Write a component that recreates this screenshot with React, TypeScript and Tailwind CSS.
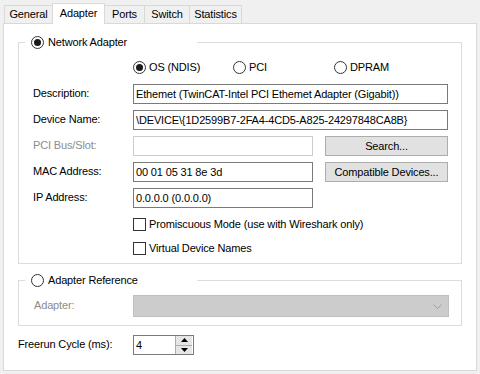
import React from "react";

const Radio = ({ checked }: { checked?: boolean }) => (
  <span className="w-[13px] h-[13px] rounded-full border border-[#333333] bg-white flex items-center justify-center shrink-0">
    {checked && <span className="w-[7px] h-[7px] rounded-full bg-[#1a1a1a]" />}
  </span>
);

const Check = () => (
  <span className="w-[13px] h-[13px] border border-[#333333] bg-white shrink-0" />
);

const Field = ({ text, disabled }: { text?: string; disabled?: boolean }) => (
  <div
    className={
      "h-[20px] border bg-white flex items-center pl-[2px] whitespace-nowrap overflow-hidden " +
      (disabled ? "border-[#cccccc]" : "border-[#7a7a7a]")
    }
  >
    {text}
  </div>
);

const Button = ({ text }: { text: string }) => (
  <div className="h-[20px] border border-[#adadad] bg-[#e1e1e1] flex items-center justify-center">
    {text}
  </div>
);

function Tab({ label, w, selected, first }: { label: string; w: string; selected?: boolean; first?: boolean }) {
  return (
    <div
      className={
        "border border-b-0 border-[#d9d9d9] flex items-center justify-center " +
        w +
        (first ? "" : " -ml-px") +
        (selected ? " h-[21px] -mb-px bg-white relative z-10 pb-[2px]" : " h-[18px] bg-[#f0f0f0] pb-px")
      }
    >
      {label}
    </div>
  );
}

export default function App() {
  return (
    <div className="w-[480px] h-[374px] bg-[#f0f0f0] overflow-hidden text-[11px] leading-none tracking-[-0.15px] text-black font-['Liberation_Sans',Arial,sans-serif]">
      <div className="flex items-end h-[23px] pl-[4px]">
        <Tab label="General" w="w-[49px]" first />
        <Tab label="Adapter" w="w-[53px]" selected />
        <Tab label="Ports" w="w-[41px]" />
        <Tab label="Switch" w="w-[46px]" />
        <Tab label="Statistics" w="w-[53px]" />
      </div>
      <div className="ml-[3px] w-[474px] h-[348px] border border-[#d9d9d9] bg-white pl-[14px] pt-[10px]">
        <fieldset className="w-[444px] border border-[#dcdcdc] pb-[8px]">
          <legend className="ml-[6px] w-[172px] h-[16px] flex items-center gap-[4px] pl-[6px]">
            <Radio checked />
            <span>Network Adapter</span>
          </legend>
          <div className="pl-[14px] pt-[11px]">
            <div className="flex h-[13px] items-center">
              <div className="w-[100px]" />
              <div className="w-[100px] flex items-center gap-[3px]">
                <Radio checked />
                <span>OS (NDIS)</span>
              </div>
              <div className="w-[101px] flex items-center gap-[3px]">
                <Radio />
                <span>PCI</span>
              </div>
              <div className="flex items-center gap-[3px]">
                <Radio />
                <span>DPRAM</span>
              </div>
            </div>
            <div className="mt-[10px] grid grid-cols-[88px_180px_123px] gap-x-[12px] gap-y-[6px] items-center">
              <span className="-mt-[2px]">Description:</span>
              <div className="col-span-2">
                <Field text="Ethemet (TwinCAT-Intel PCI Ethemet Adapter (Gigabit))" />
              </div>
              <span className="-mt-[2px]">Device Name:</span>
              <div className="col-span-2">
                <Field text="\DEVICE\{1D2599B7-2FA4-4CD5-A825-24297848CA8B}" />
              </div>
              <span className="-mt-[2px] text-[#8c8c8c]">PCI Bus/Slot:</span>
              <Field disabled />
              <Button text="Search..." />
              <span className="-mt-[2px]">MAC Address:</span>
              <Field text="00 01 05 31 8e 3d" />
              <Button text="Compatible Devices..." />
              <span className="-mt-[2px]">IP Address:</span>
              <Field text="0.0.0.0 (0.0.0.0)" />
              <div />
            </div>
            <div className="mt-[10px] pl-[100px] flex flex-col gap-[11px]">
              <div className="flex items-center gap-[3px] h-[13px]">
                <Check />
                <span>Promiscuous Mode (use with Wireshark only)</span>
              </div>
              <div className="flex items-center gap-[3px] h-[13px]">
                <Check />
                <span>Virtual Device Names</span>
              </div>
            </div>
          </div>
        </fieldset>
        <fieldset className="mt-[8px] w-[444px] border border-[#dcdcdc] pb-[8px]">
          <legend className="ml-[6px] w-[172px] h-[16px] flex items-center gap-[4px] pl-[6px]">
            <Radio />
            <span>Adapter Reference</span>
          </legend>
          <div className="pl-[15px] pt-[7px] flex items-center">
            <span className="w-[99px] text-[#8c8c8c] -mt-[2px]">Adapter:</span>
            <div className="w-[316px] h-[22px] bg-[#cccccc] border border-[#bfbfbf] flex items-center justify-end pr-[6px]">
              <svg width="9" height="5" viewBox="0 0 9 5">
                <path d="M0.5 0.5 L4.5 4.5 L8.5 0.5" fill="none" stroke="#a0a0a0" strokeWidth="1" />
              </svg>
            </div>
          </div>
        </fieldset>
        <div className="mt-[9px] flex items-center">
          <span className="w-[115px] -mt-[2px]">Freerun Cycle (ms):</span>
          <div className="w-[61px] h-[20px] border border-[#7a7a7a] flex items-center bg-white">
            <span className="pl-[2px] flex-1">4</span>
            <div className="w-[17px] h-[18px] flex flex-col border-l border-[#acacac] bg-[#e6e6e6] mr-px">
              <div className="flex-1 flex items-center justify-center border-b border-[#acacac]">
                <svg width="7" height="4" viewBox="0 0 7 4">
                  <path d="M3.5 0 L7 4 L0 4 Z" fill="#000" />
                </svg>
              </div>
              <div className="flex-1 flex items-center justify-center">
                <svg width="7" height="4" viewBox="0 0 7 4">
                  <path d="M0 0 L7 0 L3.5 4 Z" fill="#000" />
                </svg>
              </div>
            </div>
          </div>
        </div>
      </div>
    </div>
  );
}
